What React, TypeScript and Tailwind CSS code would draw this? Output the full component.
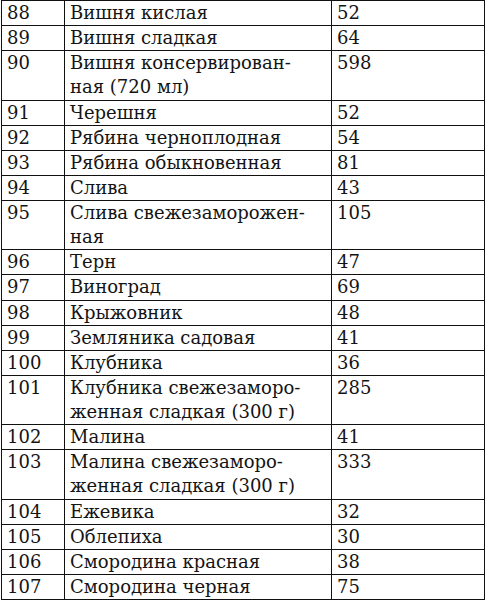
import React from "react";

const rows: [string, string[], string][] = [
  ["88", ["Вишня кислая"], "52"],
  ["89", ["Вишня сладкая"], "64"],
  ["90", ["Вишня консервирован-", "ная (720 мл)"], "598"],
  ["91", ["Черешня"], "52"],
  ["92", ["Рябина черноплодная"], "54"],
  ["93", ["Рябина обыкновенная"], "81"],
  ["94", ["Слива"], "43"],
  ["95", ["Слива свежезаморожен-", "ная"], "105"],
  ["96", ["Терн"], "47"],
  ["97", ["Виноград"], "69"],
  ["98", ["Крыжовник"], "48"],
  ["99", ["Земляника садовая"], "41"],
  ["100", ["Клубника"], "36"],
  ["101", ["Клубника свежезаморо-", "женная сладкая (300 г)"], "285"],
  ["102", ["Малина"], "41"],
  ["103", ["Малина свежезаморо-", "женная сладкая (300 г)"], "333"],
  ["104", ["Ежевика"], "32"],
  ["105", ["Облепиха"], "30"],
  ["106", ["Смородина красная"], "38"],
  ["107", ["Смородина черная"], "75"],
];

export default function App() {
  return (
    <div className="w-[486px] h-[601px] bg-white overflow-hidden">
      <table
        className="ml-px border-collapse text-[#141414] text-[18px] leading-[24.125px]"
        style={{ fontFamily: '"DejaVu Serif", serif' }}
      >
        <colgroup>
          <col className="w-[63px]" />
          <col className="w-[267px]" />
          <col className="w-[153px]" />
        </colgroup>
        <tbody>
          {rows.map(([n, name, v]) => (
            <tr key={n}>
              <td className="border border-[#111] pl-[5px] align-top p-0">{n}</td>
              <td className="border border-[#111] pl-[5px] align-top p-0">
                {name.map((l, i) => (
                  <div key={i} className="whitespace-nowrap">{l}</div>
                ))}
              </td>
              <td className="border border-[#111] pl-[5px] align-top p-0">{v}</td>
            </tr>
          ))}
        </tbody>
      </table>
    </div>
  );
}
